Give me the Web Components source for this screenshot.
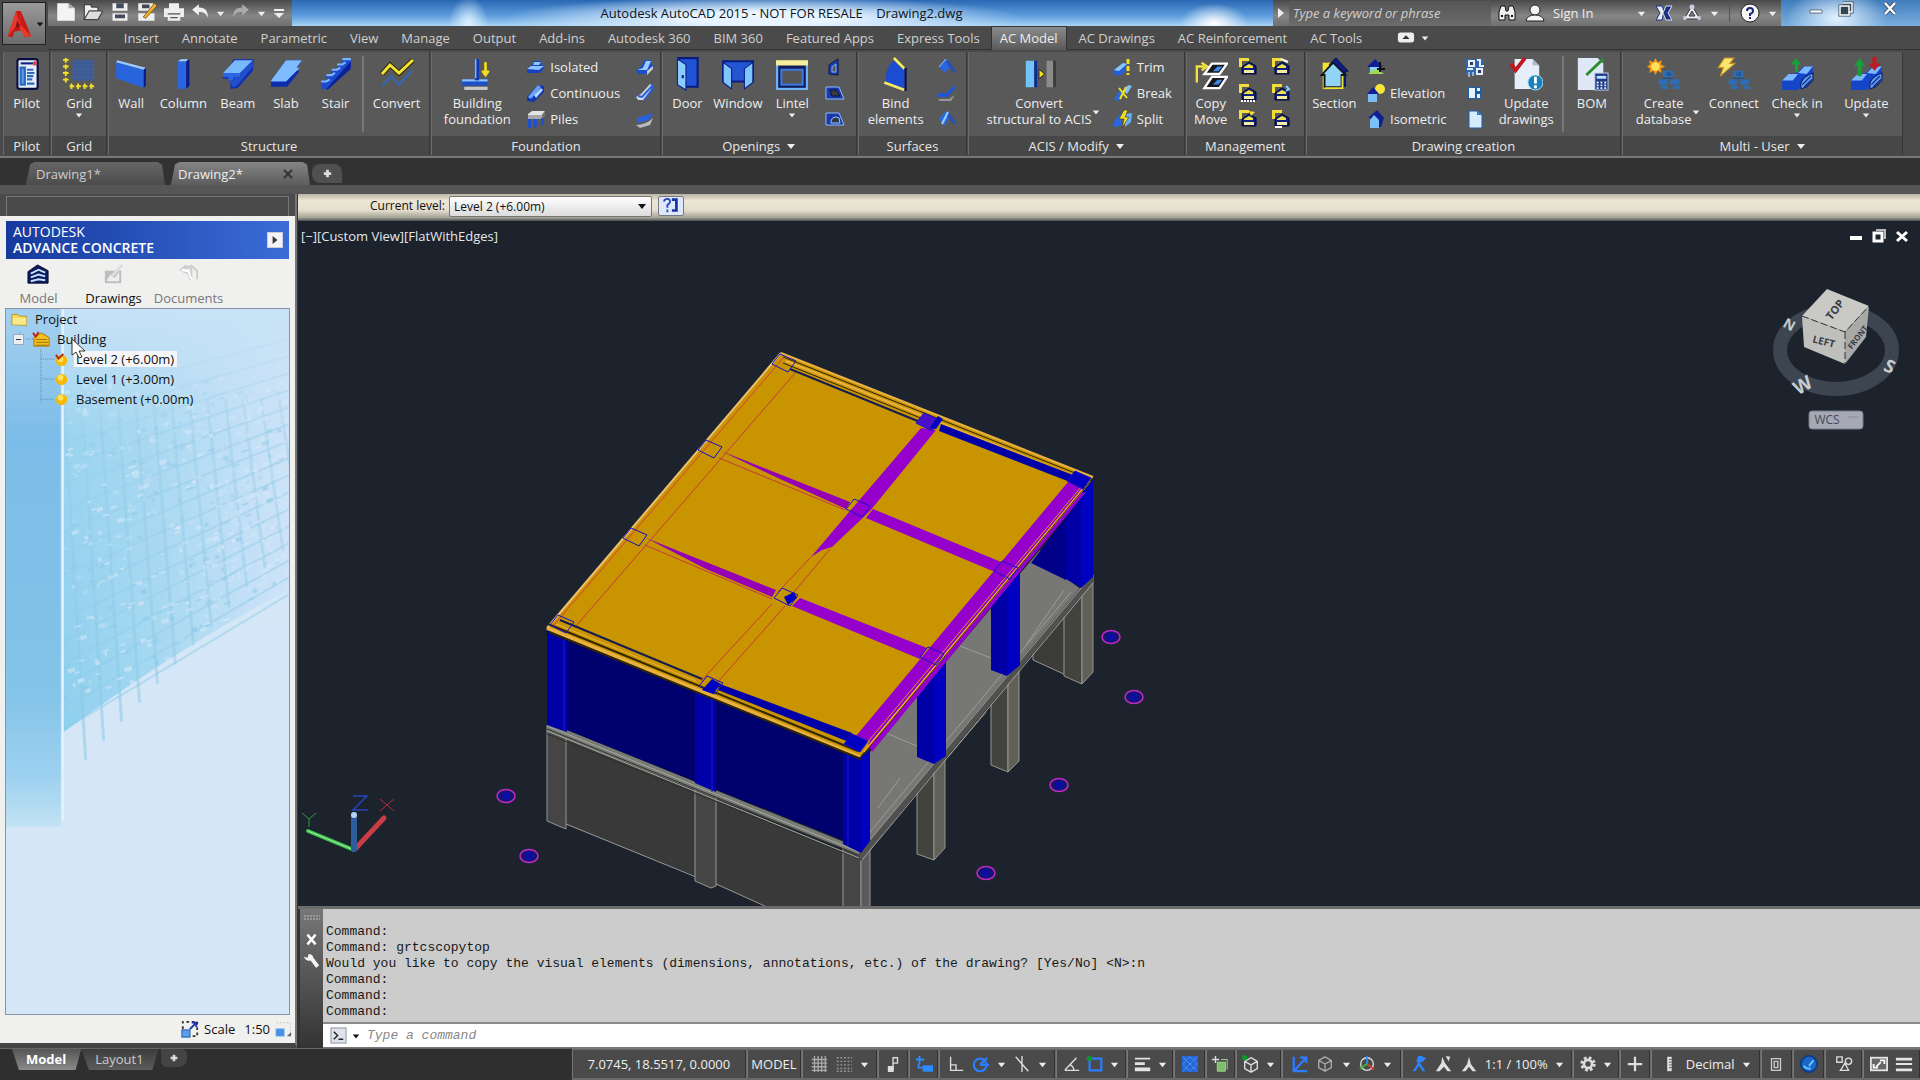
<!DOCTYPE html>
<html lang="en">
<head>
<meta charset="utf-8">
<title>Autodesk AutoCAD 2015</title>
<style>
html,body{height:100%;margin:0}
body{background:#2f2f2f;color:#eee;font:13px/16px "Open Sans","Noto Sans",sans-serif;overflow:hidden}
cad-app{height:100vh}
</style>
</head>
<body>
<cad-app></cad-app>
<script>
/* Icon artwork: [viewBox size, markup] */
const mgmt = (extra)=>[20,`<path d="M1 1h10v3H4v6H1z" fill="#f4dd38"/><path d="M4 10l7-5 7 4v8H4z" fill="#0c1f7c" stroke="#04072a"/><path d="M6 10l5-3 4 2v2H6z" fill="#f0e04a"/><path d="M6 13h10v3H6z" fill="#f6ecA0"/>${extra}`];
const db = `<path d="M15 13h10v6H15zM11 21h8v5h-8zM22 21h8v5h-8zM13 27h7v3h-7zM25 27h6v3h-6z" fill="#2d6db4"/><path d="M18 15h4v2h-4M15 20h10" stroke="#1d4c88" fill="none"/>`;
const slabs = `<path d="M2 22l6-6 8-1 6-6h9v7l-9 9-5 6H2z" fill="#1546c8"/><path d="M2 22l6-6h9l-5 6zM17 15l6-6h8l-6 7z" fill="#7cb8ff"/><path d="M20 30q-3-10 11-15v7l-6 6z" fill="#5a9cf0" stroke="#0a1a70"/><path d="M21 26l8-8M23 28l7-7" stroke="#0a1a70"/>`;
const star = n=>`<g fill="none" stroke="#ddd" stroke-width="1.5">${n}</g>`;
const ICONS = {
 logo:[32,`<path d="M4 29L13 2h5l11 27-7 1-3-7-8 1-2 6z" fill="#c81818"/><path d="M13 2l3 13-12 14zM18 2l-2 13 13 14-7 1-5-9z" fill="#e43a2c"/><path d="M14 12l3 7-5 2z" fill="#8c1010"/>`],
 'new':[16,`<path d="M1 1h9l5 4v10H1z" fill="#f4f4f4"/><path d="M10 1v4h5" fill="#aaa"/>`],
 open:[16,`<path d="M1 14V2h5l1 2h5v3" fill="#eee" stroke="#444"/><path d="M1 14l4-7h11l-4 7z" fill="#ddd" stroke="#444"/>`],
 save:[16,`<path d="M2 1h12v6H2zM2 9h12v6H2z" fill="#eee"/><path d="M5 1h6v4H5zM4 10h8v3H4z" fill="#444b5c"/>`],
 saveas:[16,`<path d="M1 1h12v6H1zM1 9h13v6H1z" fill="#eee"/><path d="M4 2h6v3H4z" fill="#445"/><path d="M5 12L14 1l2 2-9 10z" fill="#f2b42c" stroke="#6a3c10" stroke-width=".6"/>`],
 print:[16,`<path d="M4 1h8v4H4zM0 5h16v7H0zM3 10h10v5H3z" fill="#eee"/><path d="M3 9h10v1H3zM5 12h6v1H5z" fill="#555"/>`],
 undo:[16,`<path d="M1 6l6-5v3c6 0 8 3 8 9-2-4-4-5-8-5v3z" fill="#eee"/>`],
 redo:[16,`<path d="M15 6L9 1v3C3 4 1 7 1 13c2-4 4-5 8-5v3z" fill="#aaa"/>`],
 qmenu:[12,`<path d="M1 2h10v2H1zM1 6h10l-5 5z" fill="#eee"/>`],
 down:[10,`<path d="M1 3h8L5 8z" fill="#eee"/>`],
 ddown:[10,`<path d="M1 3h8L5 8z" fill="#111"/>`],
 right:[10,`<path d="M2 0l6 5-6 5z" fill="#eee"/>`],
 dright:[10,`<path d="M2 0l6 5-6 5z" fill="#333"/>`],
 binoc:[20,`<path d="M2 17V9l2-6h4l1 5h2l1-5h4l2 6v8h-6v-5H8v5z" fill="#f0f0f0" stroke="#111"/><path d="M4 13h2M14 13h2" stroke="#111" stroke-width="2"/>`],
 user:[20,`<circle cx="10" cy="7" r="5" fill="#f4f4f4" stroke="#222"/><path d="M1 18q1-6 9-6t9 6z" fill="#f4f4f4" stroke="#222"/>`],
 xch:[20,`<path d="M2 3h6l2 5-2 9H2l4-7z" fill="#eee" stroke="#16308a"/><path d="M18 3h-6l-3 7 3 7h6l-4-7z" fill="#16308a" stroke="#dde"/>`],
 a360:[20,`<path d="M10 3L2 16h16zM10 8l-3 5h6z" fill="#eee" fill-rule="evenodd" stroke="#334"/><circle cx="10" cy="4" r="2.5" fill="#ccd"/><circle cx="3" cy="15" r="2" fill="#ccd"/><circle cx="17" cy="15" r="2" fill="#ccd"/>`],
 help:[20,`<circle cx="10" cy="10" r="9" fill="#f6f6f6" stroke="#222"/><path d="M7 8q0-3 3-3t3 3q0 2-3 3v2M10 14v2" stroke="#142a78" stroke-width="2" fill="none"/>`],
 winmin:[16,`<path d="M2 9h12v3H2z" fill="#fff" stroke="#345" stroke-width=".7"/>`],
 winmax:[16,`<path d="M5 2h9v9h-3M2 5h9v9H2zM5 8h3v3H5z" fill="none" stroke="#345" stroke-width="3"/><path d="M5 2h9v9h-3M2 5h9v9H2z" fill="none" stroke="#fff" stroke-width="1.5"/>`],
 winclose:[16,`<path d="M3 2l10 11M13 2L3 13" stroke="#345" stroke-width="4"/><path d="M3 2l10 11M13 2L3 13" stroke="#fff" stroke-width="2.5"/>`],
 ribmin:[20,`<rect x="1" y="4" width="18" height="11" rx="3" fill="#eee"/><path d="M6 11l4-4 4 4z" fill="#333"/>`],
 pilot:[32,`<rect x="7" y="2" width="19" height="28" rx="2" fill="#e8eef8" stroke="#081040" stroke-width="2"/><path d="M10 5h12v2H10z" fill="#102080"/><path d="M22 4h3v4h-3z" fill="#e04040"/><path d="M10 10h4v16h-4zM16 12h6M16 15h7M16 18h6M16 21h5M16 25h7" stroke="#2a6ac4" stroke-width="2" fill="#5a9ae0"/>`],
 grid:[36,`<path d="M11 3h23v22H11z" fill="#45608e"/><path d="M14 3v22M18 3v22M22 3v22M26 3v22M30 3v22M11 7h23M11 11h23M11 15h23M11 19h23M11 23h23" stroke="#385a9c"/><g stroke="#f4e020" stroke-width="2"><path d="M4 1v26" stroke-dasharray="5 2"/><path d="M1 3h6M1 10h6M1 17h6M1 24h6"/><path d="M8 31h26" stroke-dasharray="5 2"/><path d="M10 28v6M17 28v6M24 28v6M31 28v6"/></g>`],
 wall:[32,`<path d="M2 5l26 7v17L2 20z" fill="#2864dc"/><path d="M2 5l1-2 27 7-2 2z" fill="#9cc8ff"/><path d="M28 12l2-2v17l-2 2z" fill="#081c88"/>`],
 column:[32,`<path d="M11 4h8v26h-8z" fill="#2a66e0"/><path d="M11 4l3-2h7l-2 2z" fill="#a8d0ff"/><path d="M19 4l3-2v25l-3 3z" fill="#071a90"/>`],
 beam:[32,`<path d="M12 2h19l-1 11-14 16-7 1v-9l-8-1z" fill="#0e2fb4"/><path d="M13 3h17L18 15H2z" fill="#78b8fc"/><path d="M2 15h16v4H12l-1 3H7v-3H2z" fill="#2c66e0"/><path d="M18 15L30 3v6L17 25l-5 4-5-7h5v-3h6z" fill="#2250cc"/>`],
 slab:[32,`<path d="M2 23L16 3h15l-6 10h4L17 28H2z" fill="#0d2dac"/><path d="M2 22L16 3h15l-5 7h3L16 23H2z" fill="#7cbcff"/>`],
 stair:[32,`<path d="M2 30v-7h5v-6h5v-5h5V7h5V2h8v7L9 30z" fill="#1d4ad0"/><path d="M2 23h5l3-2M7 17h5l3-2M12 12h5l3-2M17 7h5l3-2M22 2h8" stroke="#7ab4ff" stroke-width="2" fill="none"/><path d="M30 4v7L9 30l-3 1z" fill="#0a2298"/>`],
 convert:[34,`<path d="M2 17l8-9 9 8L33 3" stroke="#302c00" stroke-width="5" fill="none"/><path d="M2 17l8-9 9 8L33 3" stroke="#f4e43a" stroke-width="3" fill="none"/><path d="M2 29l9-10 8 9 13-14" stroke="#2f68b8" stroke-width="2" fill="none"/>`],
 bfound:[32,`<path d="M4 28h22v3H4z" fill="#c8c8c8"/><path d="M2 21h24v6H2z" fill="#1c50c8"/><path d="M2 21h24v2H2z" fill="#8cc4ff"/><path d="M14 2h4v20h-4z" fill="#1438b0"/><path d="M14 2h1.500v18H14z" fill="#79b4ff"/><path d="M24 5v11M21 13l3 4 3-4" stroke="#f2e020" stroke-width="2.500" fill="none"/>`],
 isolated:[20,`<path d="M1 12l4-3 3-5h7v4l4 1-5 7H1z" fill="#1440c4"/><path d="M1 12l4-3h13l-5 4zM8 5h7l-2 3H7z" fill="#8cc4ff"/>`],
 cont:[20,`<path d="M1 14L12 2l6 1v6L8 19l-7-1z" fill="#1234b0"/><path d="M2 14L12 2l3 2L5 16z" fill="#64a4fa"/><path d="M8 12l7-7 2 2-7 8z" fill="#b0d8ff"/>`],
 piles:[20,`<path d="M2 5l4-3h13l-3 4H2z" fill="#e4e4e4"/><path d="M2 6h14v4H2z" fill="#a8a8a8"/><path d="M16 6l3-4v5l-3 3z" fill="#777"/><path d="M2 10h3v9H2zM8 10h3v8H8zM15 9h3v7h-3z" fill="#1c50d0"/>`],
 fs1:[20,`<path d="M1 13l5-3 3-7h7v4l3 2-7 8H3z" fill="#1c50c8"/><path d="M2 13l6-2 3-7h5l-4 9z" fill="#9cccff"/><path d="M12 14l6-5v3l-6 6z" fill="#c8ccd4"/>`],
 fs2:[20,`<path d="M1 14l5-3L15 1l3 2-9 14H3z" fill="#cfd6e4"/><path d="M3 13l4 1L17 3v4L9 17" stroke="#2860d8" stroke-width="2" fill="none"/>`],
 fs3:[20,`<path d="M2 9l16-5-4 7-12 3z" fill="#2860e0"/><path d="M1 16q10 0 17-7l-3 7-10 3z" fill="#bbb"/>`],
 door:[32,`<path d="M8 1h18v27H14z" fill="#2154d4" stroke="#0a1c80" stroke-width="2"/><path d="M7 2l8 5v24l-8-5z" fill="#8accff" stroke="#0c2080"/><path d="M12 17v3" stroke="#0c2080" stroke-width="2"/>`],
 windowi:[32,`<path d="M2 4h28v19H2z" fill="#2456d4" stroke="#0a1c80" stroke-width="2"/><path d="M2 5l8 6v19l-8-6zM30 5l-8 6v19l8-6z" fill="#80c4fc" stroke="#0a1c80"/>`],
 lintel:[32,`<rect x="2" y="5" width="28" height="25" fill="#111b58" stroke="#6fb4ff" stroke-width="2"/><rect x="6" y="12" width="20" height="14" fill="#555" stroke="#3a78e0" stroke-width="2"/><path d="M1 3h30v5H1z" fill="#f6ee9c"/>`],
 op1:[20,`<path d="M4 17V8l9-6v16z" fill="#2040b0" stroke="#080f50"/><path d="M7 15v-5l4-3v8z" fill="#555" stroke="#7ab0ff"/>`],
 op2:[20,`<path d="M1 4h13l5 12H1z" fill="#1c38a8" stroke="#86bcff"/><path d="M5 7h6l4 6H7z" fill="#3c3c44" stroke="#06103c"/>`],
 op3:[20,`<path d="M1 4h13l5 12H1z" fill="#1c38a8" stroke="#86bcff"/><path d="M6 12q2-6 8-3l1 5H6z" fill="#30364a" stroke="#9cf"/>`],
 bind:[32,`<path d="M6 24q0-14 8-21l10 9v19z" fill="#1c4cd0"/><path d="M5 24l19 7M14 1l10 10" stroke="#f4ec5c" stroke-width="2.500"/><path d="M25 10v22" stroke="#06135c" stroke-width="2"/>`],
 sf1:[20,`<path d="M2 10l7-8 5 6-6 8z" fill="#2a66e0"/><path d="M2 10l7-8" stroke="#92c6ff"/><path d="M10 4l8 11" stroke="#2450b8" stroke-width="3"/>`],
 sf2:[20,`<path d="M1 10h8l9-8v4l-8 8H1z" fill="#2056d4"/><path d="M1 16h11l6-4-4 6H3z" fill="#999"/>`],
 sf3:[20,`<path d="M2 10l7-8 5 4-7 11z" fill="#2a6ae4"/><path d="M10 4l8 11" stroke="#2450b8" stroke-width="3"/><path d="M5 15l6-12" stroke="#9cd0ff" stroke-width="2"/>`],
 acis:[36,`<path d="M4 4h9v28H4z" fill="#72c4f4"/><path d="M13 4h3v28h-3z" fill="#0d2a9c"/><path d="M18 13l6 5-6 5z" fill="#f4e020" stroke="#222"/><path d="M26 4h7v28h-7z" fill="#8c8c8c"/><path d="M33 4h3v28h-3z" fill="#3c3c3c"/>`],
 trim:[20,`<path d="M1 13l9-7 4 1-3 9-5 3-5-2z" fill="#2460d8"/><path d="M1 13l9-7 4 1-8 7z" fill="#8cc8ff"/><path d="M15 2v16" stroke="#f2e020" stroke-width="3" stroke-dasharray="5 2"/>`],
 brk:[20,`<path d="M1 17l5-9 4 2-5 8z" fill="#2a66e0"/><path d="M10 8l5-6 4 1-5 8z" fill="#80c0ff"/><path d="M6 5l8 10M13 4l-6 12" stroke="#f2e020" stroke-width="2"/>`],
 split:[20,`<path d="M1 13l5-7 4-1-2 12-7 1z" fill="#2a66e0"/><path d="M12 5l7-1-1 9-6 5z" fill="#68b0fa"/><path d="M11 1L6 10h5l-2 9 7-11h-4l3-7z" fill="#f2e020" stroke="#333" stroke-width=".6"/>`],
 copymove:[36,`<path d="M3 27V10h8M8 6l6 4-6 4" stroke="#f0e03c" stroke-width="2.5" fill="none"/><path d="M19 7h16l-8 11H11zM19 21h16L27 33H11z" fill="#16181c" stroke="#fff" stroke-width="2.5"/><path d="M20 15l5-5h5l-4 5zM20 29l5-5h5l-4 5z" fill="#3f8cf0"/>`],
 m1:mgmt(''),m2:mgmt('<path d="M10 2l7 3" stroke="#fff" stroke-width="2"/>'),m3:mgmt('<path d="M3 18h15" stroke="#fff" stroke-width="2" stroke-dasharray="2 1"/>'),m4:mgmt('<path d="M15 3l3 3-3 2" stroke="#8cf" fill="none" stroke-width="2"/>'),m5:mgmt('<path d="M11 2l6 1-4 4z" fill="#f4dd38"/>'),m6:mgmt('<path d="M4 18h7" stroke="#fff" stroke-width="2"/>'),
 section:[36,`<path d="M6 6h13v28H6z" fill="#f0e430"/><path d="M20 1l13 14h-3v16h-8V14l-9-6z" fill="#0d1c88" stroke="#060b3c"/><path d="M8 32V19H5L17 6l13 13h-4v13z" fill="#92d4f8" stroke="#15151c" stroke-width="2"/><path d="M8 33h19V20" stroke="#f0e430" stroke-width="2" fill="none"/>`],
 d1:[20,`<path d="M1 10l8-8 8 8z" fill="#101f94"/><path d="M4 10h9v7H4z" fill="#8cd0fc"/><path d="M2 17l5-4h6l5 4z" fill="#a0d850"/><path d="M14 5v10M11 12h8" stroke="#111" stroke-width="2"/>`],
 elevation:[20,`<circle cx="14" cy="6" r="5" fill="#f6e63c"/><path d="M1 11l6-7 6 7z" fill="#101f94"/><path d="M2 11h9v8H2z" fill="#7cbcf4"/>`],
 iso:[20,`<path d="M2 9l9-8 7 8-3 9H5V9z" fill="#0f1f90"/><path d="M4 11l4-5 5 5v8H4z" fill="#7cc0f8"/>`],
 q1:[20,`<path d="M1 2h18v16H1z" fill="#2f68b0"/><path d="M4 4h5v5H4zM12 3h3v6h4M2 12h6M12 12h5v5h-5z" fill="#2b3c60" stroke="#e8eef8" stroke-width="2"/><path d="M4 15v5M8 15v4" stroke="#fff"/>`],
 q2:[20,`<path d="M3 4h13v12H3z" fill="#1e5ca8"/><path d="M4 5h6v10H4zM12 5h3v3h-3zM12 11h3v4h-3z" fill="#e8f4fc"/>`],
 q3:[20,`<path d="M4 2h8l5 4v13H4z" fill="#d4ecfc" stroke="#1e5ca8"/><path d="M12 2v4h5" fill="#2f7cc8"/>`],
 updraw:[36,`<path d="M6 2h19l7 7v25H6z" fill="#e6eef8"/><path d="M25 2v7h7" fill="#b0bccc"/><path d="M2 7l5 7L17 1" stroke="#c01820" stroke-width="4" fill="none"/><circle cx="28" cy="27" r="8" fill="#1684bc" stroke="#bfe0f4"/><path d="M28 21v7M28 30v3" stroke="#fff" stroke-width="3"/>`],
 bom:[36,`<path d="M3 1h21l6 6v28H3z" fill="#dfe8f6"/><path d="M12 19L30 2" stroke="#2c8c30" stroke-width="3"/><rect x="21" y="17" width="14" height="18" fill="#1e3c84" stroke="#c0d0ec"/><path d="M23 20h10v3H23z" fill="#bfe0ff"/><path d="M24 26v8M28 26v8M32 26v8" stroke="#dfe8ff" stroke-width="2" stroke-dasharray="2 1"/>`],
 createdb:[32,`<path d="M8 1l2 4 4-2-1 4 4 2-4 2 1 4-4-2-2 4-2-4-4 2 1-4-3-2 3-2-1-4 4 2z" fill="#ef9a1a"/><circle cx="8" cy="9" r="4" fill="#ffe25a"/>${db}`],
 connect:[32,`<path d="M7 1h9l-4 5h5L3 18l3-8H1z" fill="#f6e470" stroke="#c89018"/>${db}`],
 checkin:[32,`${slabs}<path d="M14 14V7h-4l5-6 5 6h-3v7z" fill="#18a038"/>`],
 update:[32,`${slabs}<path d="M8 18V8H5l5-7 5 7h-3v10z" fill="#18a038"/><path d="M22 0h4v6h4l-6 7-6-7h4z" fill="#c01c24"/>`],
 tabx:[12,`<path d="M2 2l8 8M10 2l-8 8" stroke="#333" stroke-width="2"/>`],
 plus:[12,`<path d="M6 2v8M2 6h8" stroke="#ddd" stroke-width="3"/>`],
 wx:[16,`<path d="M3 2l10 12M13 2L3 14" stroke="#fff" stroke-width="3"/>`],
 wrench:[18,`<path d="M1 5l4 1 1-4q4 0 5 4l6 8-3 3-6-8q-5 1-7-4z" fill="#f4f4f4"/>`],
 grip:[18,`<path d="M1 7h16M1 10h16" stroke="#999" stroke-dasharray="2 1" stroke-width="2"/>`],
 prompt:[18,`<rect x="1" y="1" width="16" height="16" fill="#dfe3ec" stroke="#8a90a0"/><path d="M4 5l4 4-4 4M9 13h5" stroke="#222" stroke-width="1.5" fill="none"/>`],
 cmdq:[20,`<path d="M2 5q1-3 4-3t3 3q0 2-3 4v3M6 14v3" stroke="#2048c0" stroke-width="2" fill="none"/><path d="M11 3h5v12h-5" stroke="#1434a8" stroke-width="3" fill="none"/>`],
 model:[24,`<path d="M1 21V9l10-7 11 6v13z" fill="#0c1a5c" stroke="#080c30"/><path d="M4 11l8-4 7 3M4 15l8-3 7 2M4 19l8-2 7 1" stroke="#c8e0ff" stroke-width="2" fill="none"/>`],
 drawings:[24,`<path d="M3 8h17v13H3z" fill="#bdbdbd"/><path d="M5 18l4-6 4 4 5-7v10H5z" fill="#eee"/><path d="M10 14L21 2" stroke="#ddd" stroke-width="3"/>`],
 docs:[24,`<path d="M3 8l6-5 6 3v9M8 6l7-3 6 5v9M6 9q7 0 8 9" fill="none" stroke="#cdcdcd" stroke-width="2"/><path d="M5 7l7 2 3 8" stroke="#fff" stroke-width="2" fill="none"/>`],
 folder:[20,`<path d="M1 16V4h7l2 2h8v11z" fill="#f6d858" stroke="#b48a20"/><path d="M2 8h16v8H2z" fill="#fbe88a"/>`],
 building:[20,`<path d="M2 17V8l8-5 8 5v9z" fill="#f2c01c" stroke="#a87808"/><path d="M4 10h12M4 13h13M4 16h13" stroke="#a07010"/><path d="M1 3l3 4 3-5" stroke="#c02018" stroke-width="2" fill="none"/>`],
 ball:[16,`<circle cx="8" cy="8" r="6" fill="#f6b800"/><circle cx="7" cy="6" r="3" fill="#ffe45c"/>`],
 ballc:[16,`<circle cx="8" cy="9" r="6" fill="#f6b800"/><circle cx="7" cy="8" r="3" fill="#ffe45c"/><path d="M2 3l3 4 5-5" stroke="#b02818" stroke-width="2" fill="none"/>`],
 scale:[20,`<path d="M2 10V2h16v16h-8" fill="none" stroke="#333" stroke-width="2" stroke-dasharray="3 3"/><rect x="1" y="11" width="9" height="8" fill="#5aa0ec" stroke="#1a4ca0"/><path d="M10 10l6-6M12 3h5v5" stroke="#1830a8" stroke-width="2" fill="none"/>`],
 scale2:[20,`<path d="M2 2h16v16" fill="none" stroke="#bbb" stroke-dasharray="2 2"/><rect x="1" y="9" width="10" height="9" fill="#4a90e0" stroke="#9cf"/><path d="M14 18h5v-5z" fill="#666"/>`],
 s_grid:[20,star('<path d="M5 1v18M9 1v18M13 1v18M17 1v18M2 5h17M2 9h17M2 13h17M2 17h17" stroke="#aaa"/>')],
 s_snap:[20,`<path d="M2 3h17M2 7h17M2 11h17M2 15h17M2 18h17" stroke="#999" stroke-width="1.500" stroke-dasharray="2 2"/>`],
 s_infer:[20,star('<path d="M10 17V3h5v6h-5"/><path d="M5 13h5v5H5z" fill="#ddd"/>')],
 s_dyn:[20,`<path d="M5 1v9M1 5h9" stroke="#2c8cff" stroke-width="2"/><path d="M9 12h11v6H9z" fill="#2c8cff" stroke="#2c8cff"/><path d="M4 10v4h5" fill="none" stroke="#2c8cff" stroke-width="2"/>`],
 s_ortho:[20,star('<path d="M4 2v15h14M4 11h6v6"/>')],
 s_polar:[20,`<g fill="none" stroke="#2c7cff" stroke-width="2.5"><circle cx="9" cy="11" r="7"/><path d="M9 11h10M9 11l8-8"/></g>`],
 s_iso:[20,star('<path d="M10 1v18M3 2l14 16"/>')],
 s_track:[20,star('<path d="M2 17h16M2 17L15 3M8 11q4 2 4 6"/>')],
 s_osnap:[20,`<path d="M4 4h13v13H4z" fill="none" stroke="#2c7cff" stroke-width="2.5"/><circle cx="4" cy="4" r="3" fill="#0a9a2c"/>`],
 s_lw:[20,`<path d="M1 3h17v2H1zM1 8h11v3H1zM1 14h17v4H1z" fill="#e4e4e4"/>`],
 s_trans:[20,`<path d="M1 1h18v18H1z" fill="#2468d8"/><path d="M2 2l16 16M18 2L2 18M10 2l8 8-8 8-8-8z" stroke="#7ab6ff" stroke-dasharray="1 1" fill="none"/>`],
 s_cyc:[20,`<path d="M1 5h8M5 1v8" stroke="#ddd" stroke-width="1.500"/><path d="M11 5h7v11" stroke="#a4dc90" fill="none"/><path d="M7 8h9v10H7z" fill="#7cbc6c" stroke="#a4dc90"/>`],
 s_3d:[20,star('<path d="M10 3l7 4v8l-7 4-7-4V7zM3 7l7 4 7-4M10 11v8"/>')+`<circle cx="3" cy="3" r="3" fill="#0a9a2c"/>`],
 s_ucs:[20,`<path d="M3 2v16h15M3 18L16 4M10 3h7v6" fill="none" stroke="#2c7cff" stroke-width="2.5"/>`],
 s_filt:[20,star('<path d="M10 2l7 4v8l-7 4-7-4V6zM3 6l7 4 7-4M10 10v8" stroke="#aaa"/>')],
 s_giz:[20,star('<circle cx="10" cy="10" r="7"/>')+`<path d="M10 10V1" stroke="#2c8cff" stroke-width="2"/><path d="M10 10l8 6" stroke="#e04030" stroke-width="2"/><path d="M10 10l-8 5" stroke="#40b040" stroke-width="2"/>`],
 s_anb:[20,`<path d="M10 7l7 11h-3l-4-6-4 6H3zM9 1h4l5 3-5 4H7z" fill="#2c84ff"/>`],
 s_anf:[20,`<path d="M8 2l3 7 7 9h-4l-4-5-5 5H1l6-9zM12 1l5 1-2 5z" fill="#e0e0e0"/>`],
 s_an:[20,`<path d="M10 2l2 8 6 8h-4l-4-5-4 5H2l6-8z" fill="#e0e0e0"/>`],
 s_gear:[20,`<circle cx="10" cy="10" r="7" fill="none" stroke="#ddd" stroke-width="3" stroke-dasharray="3 2.5"/><circle cx="10" cy="10" r="4.5" fill="none" stroke="#ddd" stroke-width="3"/>`],
 s_plus:[20,`<path d="M10 2v16M2 10h16" stroke="#ddd" stroke-width="2.5"/>`],
 s_rule:[20,`<path d="M8 2h5v16H8z" fill="#e0e0e0"/><path d="M10 5h3M10 8h3M10 11h3M10 14h3" stroke="#555"/>`],
 s_qp:[20,`<path d="M5 4h10v13H5zM8 7h4v7H8z" fill="none" stroke="#ccc" stroke-width="1.500"/>`],
 s_hw:[20,`<circle cx="10" cy="10" r="9" fill="#1c66c8" stroke="#0c3c88" stroke-width="2"/><path d="M10 12l5-6M4 12q3 4 8 3" stroke="#6cf" stroke-width="2" fill="none"/>`],
 s_isoo:[20,star('<path d="M2 2h6v6H2zM8 14l3-5 4 8H6z"/><circle cx="15" cy="7" r="3.5"/>')],
 s_clean:[20,`<rect x="1" y="3" width="18" height="14" fill="#666" stroke="#e4e4e4" stroke-width="2"/><path d="M11 6h5v4M9 14H4v-4M12 8l-5 5" stroke="#fff" stroke-width="2" fill="none"/>`],
 s_menu:[20,`<path d="M1 3h18v3H1zM1 9h18v2H1zM1 15h18v3H1z" fill="#e4e4e4"/>`],
 vmin:[14,`<path d="M1 7h12v4H1z" fill="#fff"/>`],
 vmax:[14,`<path d="M4 1h9v9" fill="none" stroke="#bbb" stroke-width="2"/><rect x="2" y="4" width="8" height="8" fill="none" stroke="#fff" stroke-width="3"/>`],
 vclose:[14,`<path d="M2 3l10 9M12 3L2 12" stroke="#fff" stroke-width="3"/>`]
};

const BASE = `*{box-sizing:border-box}button{font:inherit;color:inherit;background:none;border:0;margin:0;padding:0;cursor:default}a{color:inherit;text-decoration:none}`;
function define(name, css, html){
  customElements.define(name, class extends HTMLElement{
    connectedCallback(){
      if(this.shadowRoot) return;
      const t=document.createElement('template');
      t.innerHTML=`<style>${BASE}${css}</style>${typeof html==='function'?html(this):html}`;
      this.attachShadow({mode:'open'}).append(t.content.cloneNode(true));
    }
  });
}

define('cad-icon',`:host{display:inline-flex;flex:none;width:var(--s,20px);height:var(--s,20px)}svg{width:100%;height:100%;display:block}`,
 el=>{const [n,m]=ICONS[el.getAttribute('name')];return `<svg viewBox="0 0 ${n} ${n}" aria-hidden="true">${m}</svg>`;});
const ic=(n,s)=>`<cad-icon name="${n}" style="--s:${s}px"></cad-icon>`;

/* Title row */
define('cad-title',`
:host{display:flex;height:26px;background:linear-gradient(#4a4a4a,#858585 60%,#707070)}
.qat{display:flex;align-items:center;gap:7px;width:244px;padding-left:8px}
.sky{flex:1;display:flex;align-items:center;justify-content:center;color:#0c1420;white-space:pre;padding-right:2px;
 background:radial-gradient(ellipse 20px 26px at 18% 90%,#dff2ff,transparent),radial-gradient(ellipse 34px 20px at 94% 90%,#fff,transparent),radial-gradient(ellipse 260px 22px at 48% 70%,#e8f4ff 30%,transparent),linear-gradient(#2a68b4,#5c9cdc 60%,#a8d4f6)}
.info{display:flex;align-items:center;width:508px}
.key{width:16px;display:flex;justify-content:center}
input{width:202px;height:25px;border:0;background:linear-gradient(#555,#6c6c6c);color:#ddd;font:italic 13px "Open Sans",sans-serif;padding:0 4px}
input::placeholder{color:#d0d0d0;opacity:1}
.acc{flex:1;display:flex;align-items:center;gap:8px;padding:0 4px 0 6px}
.acc span{flex:1;color:#eee}
.acc i{width:1px;height:18px;background:#555;margin:0 2px}
.win{width:139px;display:flex;align-items:center;justify-content:flex-end;gap:14px;padding:0 22px 5px 0;background:radial-gradient(ellipse 50px 30px at 40% 70%,#e4f2ff,transparent),linear-gradient(#3f7cbc,#7ab0e0)}
.win button:last-child{margin-left:14px}
`,`<div class="qat">${['new','open','save','saveas','print'].map(n=>`<button aria-label="${n}">${ic(n,20)}</button>`).join('')}<button aria-label="undo">${ic('undo',18)}</button>${ic('down',9)}<button aria-label="redo">${ic('redo',18)}</button>${ic('down',9)}${ic('qmenu',12)}</div>
<div class="sky"><slot></slot></div>
<div class="info"><span class="key">${ic('right',10)}</span><input aria-label="Search" placeholder="Type a keyword or phrase">
<div class="acc">${ic('binoc',20)}${ic('user',20)}<span>Sign In</span>${ic('down',9)}${ic('xch',20)}${ic('a360',20)}${ic('down',9)}<i></i>${ic('help',20)}${ic('down',9)}</div></div>
<div class="win"><button aria-label="Minimize">${ic('winmin',16)}</button><button aria-label="Restore">${ic('winmax',16)}</button><button aria-label="Close">${ic('winclose',16)}</button></div>`);

/* Ribbon tab row */
define('cad-ribbon-tabs',`
:host{display:flex;height:24px;background:#4a4a4a;border-bottom:1px solid #333;padding-left:4px;align-items:stretch}
a{padding:4px 11px 0 12px;color:#d0d0d0;white-space:nowrap}
a.on{background:linear-gradient(#8a8a8a,#5a5a5a);border:1px solid #333;border-bottom:0;color:#eee;margin-bottom:-1px;padding:3px 8px 0}
.m{display:flex;align-items:center;gap:6px;margin-left:24px}
`,`${['Home','Insert','Annotate','Parametric','View','Manage','Output','Add-ins','Autodesk 360','BIM 360','Featured Apps','Express Tools','AC Model','AC Drawings','AC Reinforcement','AC Tools'].map(t=>`<a href="#" ${t==='AC Model'?'class="on"':''}>${t}</a>`).join('')}<span class="m">${ic('ribmin',18)}${ic('down',8)}</span>`);

/* One ribbon panel: grid of tools over a caption band */
define('cad-panel',`
:host{display:flex;flex-direction:column;flex:var(--w) 1 0;min-width:0;border-left:1px solid #6a6a6a;border-right:1px solid #383838;background:#595959}
.body{flex:1;display:grid;grid-template-columns:var(--cols);padding-top:4px}
.cap{height:19px;display:flex;align-items:center;justify-content:center;gap:6px;background:#474747;color:#e6e6e6;white-space:nowrap}
`,el=>`<div class="body"><slot></slot></div><div class="cap">${el.getAttribute('caption')}${el.hasAttribute('more')?ic('down',10):''}</div>`);
define('cad-tool',`
:host{display:block;min-width:0}
:host([sep]){border-left:2px solid #777;margin-bottom:4px}
button{width:100%;display:flex;flex-direction:column;align-items:center;white-space:nowrap;text-align:center}
cad-icon:first-child{margin:1px 0}
.t{margin-top:3px;position:relative}
.side{position:absolute;left:100%;top:12px;line-height:8px}
`,el=>{const d=el.getAttribute('drop');return `<button>${ic(el.getAttribute('icon'),34)}<span class="t"><slot></slot>${d==='side'?`<span class="side">${ic('down',8)}</span>`:''}</span>${d==='below'?ic('down',8):''}</button>`;});
define('cad-stack',`
:host{display:flex;flex-direction:column;min-width:0;gap:4px;align-items:flex-start}
button{height:22px;display:flex;align-items:center;gap:4px;white-space:nowrap;padding-left:4px}
`,el=>JSON.parse(el.getAttribute('items')).map(([i,t])=>`<button aria-label="${t||i}">${ic(i,20)}${t?`<span>${t}</span>`:''}</button>`).join(''));

const T=(i,l,x='')=>`<cad-tool icon="${i}" ${x}>${l}</cad-tool>`;
const S=(...a)=>`<cad-stack items='${JSON.stringify(a)}'></cad-stack>`;
const P=(cap,w,cols,body,more='')=>`<cad-panel caption="${cap}" ${more} style="--w:${w};--cols:${cols.map(c=>`minmax(0,${c}fr)`).join(' ')}">${body}</cad-panel>`;
define('cad-ribbon',`
:host{display:flex;gap:1px;height:108px;background:#4a4a4a;border-bottom:2px solid #777;padding:2px 0 1px 3px}
.end{width:16px}`,
 P('Pilot',46,[48],T('pilot','Pilot'))
+P('Grid',54,[56],T('grid','Grid','drop="below"'))
+P('Structure',324,[45,60,50,47,53,68],T('wall','Wall')+T('column','Column')+T('beam','Beam')+T('slab','Slab')+T('stair','Stair')+T('convert','Convert','sep'))
+P('Foundation',230,[91,110,29],T('bfound','Building<br>foundation')+S(['isolated','Isolated'],['cont','Continuous'],['piles','Piles'])+S(['fs1'],['fs2'],['fs3']))
+P('Openings',195,[50,52,58,35],T('door','Door')+T('windowi','Window')+T('lintel','Lintel','drop="below"')+S(['op1'],['op2'],['op3']),'more')
+P('Surfaces',109,[75,34],T('bind','Bind<br>elements')+S(['sf1'],['sf2'],['sf3']))
+P('ACIS / Modify',217,[141,76],T('acis','Convert<br>structural to ACIS','drop="side"')+S(['trim','Trim'],['brk','Break'],['split','Split']),'more')
+P('Management',118,[48,33,37],T('copymove','Copy<br>Move')+S(['m1'],['m3'],['m5'])+S(['m2'],['m4'],['m6']))
+P('Drawing creation',317,[56,100,30,72,59],T('section','Section')+S(['d1'],['elevation','Elevation'],['iso','Isometric'])+S(['q1'],['q2'],['q3'])+T('updraw','Update<br>drawings')+T('bom','BOM','sep'))
+P('Multi - User',282,[82,60,68,72],T('createdb','Create<br>database','drop="side"')+T('connect','Connect')+T('checkin','Check in','drop="below"')+T('update','Update','drop="below"'),'more')
+`<div class="end"></div>`);

/* Document tabs */
define('cad-doctabs',`
:host{display:flex;align-items:flex-end;height:36px;background:#323232;border-bottom:9px solid #565656;padding-left:20px}
button{height:23px;width:145px;display:flex;align-items:center;justify-content:space-between;padding:0 16px;color:#ccc;background:linear-gradient(#666,#4c4c4c);clip-path:polygon(4% 100%,7% 10%,10% 0,95% 0,98% 12%,100% 100%)}
button.on{color:#eee;background:linear-gradient(#858585,#5c5c5c);padding-left:13px}
button.add{width:30px;height:19px;padding:0;justify-content:center;margin:0 0 2px 2px;background:#505050;border-radius:8px 8px 0 8px;clip-path:none}
`,`<button>Drawing1*</button><button class="on">Drawing2*${ic('tabx',12)}</button><button class="add" aria-label="New drawing">${ic('plus',11)}</button>`);

/* Side palette */
define('cad-palette',`
:host{display:flex;flex-direction:column;width:297px;background:#f0f0ee;border-right:2px solid #777;border-bottom:5px solid #444;color:#111}
.grab{height:22px;margin:0;background:#4b4b4b;border:solid #4b4b4b;border-width:2px 6px 0}
.grab div{height:20px;border:1px solid #777;border-bottom:0}
.brand{margin:5px 6px 0;height:38px;display:flex;align-items:center;justify-content:space-between;padding:0 6px 0 7px;background:linear-gradient(90deg,#163a9c,#3a6cd8);color:#fff;font-size:14px;line-height:16px}
.brand b{font-weight:600;display:block}
.brand button{width:16px;height:16px;background:#f4f4f4;border:1px solid #ccd;display:grid;place-items:center}
.modes{display:flex;padding:4px 0 0 1px;height:49px}
.modes button{width:75px;display:flex;flex-direction:column;align-items:center;gap:4px;color:#777}
.modes .on{color:#111}
.tree{position:relative;flex:1;margin:0 5px;border:1px solid #8893a8;overflow:hidden;background:#d5e7f7}
.bg{position:absolute;inset:0;width:100%;height:100%}
ul{position:relative;list-style:none;margin:0;padding:0}
li{display:flex;align-items:center;gap:5px;height:20px;padding-left:5px;white-space:nowrap}
li.b{padding-left:7px;gap:4px}
li.l{padding-left:48px}
li span{padding:0 3px 0 2px}
li .sel{background:#f6f6f8}
.box{width:11px;height:11px;border:1px solid #9ab;background:#eee;display:grid;place-items:center;margin-right:4px}
.box::after{content:"";width:5px;height:1px;background:#335}
.cur{position:absolute;left:65px;top:29px;width:16px;height:22px}
.foot{height:28px;display:flex;align-items:center;justify-content:flex-end;gap:5px;padding:0 3px 0 0}
.foot .v{margin-left:4px}
`,()=>{
  /* Pale scaffold picture behind the tree, from a seeded scatter of flecks */
  let g='',seed=7; const rnd=()=>(seed=(seed*16807)%2147483647)/2147483647;
  for(let i=0;i<13;i++){const x=58+i*18;g+=`<path d="M${x} 90L${x+22} ${450-i*19}" stroke="#8cc8e6" stroke-width="3" opacity="${.55-i*.015}"/>`;}
  for(let i=0;i<16;i++){g+=`<path d="M58 ${90+i*22}L284 ${30+i*17}" stroke="#8ecbe8" stroke-width="2" opacity=".5"/>`;}
  for(let i=0;i<520;i++){const x=58+rnd()*224,y=70+rnd()*(345-(x-58)*.62),w=2+rnd()*5;
   g+=`<path d="M${x.toFixed(0)} ${y.toFixed(0)}l${w.toFixed(0)} -${(w/3).toFixed(1)}" stroke="${rnd()>.3?'#dbeaf9':'#86c6e6'}" stroke-width="${rnd()>.6?4:2}" opacity="${(.25+rnd()*.4).toFixed(2)}"/>`;}
  return `
<div class="grab"><div></div></div>
<div class="brand"><div>AUTODESK<b>ADVANCE CONCRETE</b></div><button aria-label="Expand">${ic('dright',8)}</button></div>
<div class="modes"><button>${ic('model',23)}Model</button><button class="on">${ic('drawings',23)}Drawings</button><button>${ic('docs',23)}Documents</button></div>
<div class="tree">
<svg class="bg" viewBox="0 0 284 704" preserveAspectRatio="none" aria-hidden="true">
<defs><linearGradient id="m" x1="0" y1="0" x2="1" y2="0"><stop offset="0" stop-color="#8ed0ee"/><stop offset=".45" stop-color="#a6d8f1"/><stop offset="1" stop-color="#cfe3f8"/></linearGradient>
<linearGradient id="t" x1="0" y1="0" x2="0" y2="1"><stop offset="0" stop-color="#c8e2f6"/><stop offset=".3" stop-color="#c8e2f6" stop-opacity=".2"/><stop offset="1" stop-color="#c8e2f6" stop-opacity="0"/></linearGradient>
<linearGradient id="s" x1="0" y1="0" x2="0" y2="1"><stop offset="0" stop-color="#a4d0f0"/><stop offset=".25" stop-color="#7cbce8"/><stop offset=".75" stop-color="#84c4e8"/><stop offset=".9" stop-color="#9cd0f0"/><stop offset="1" stop-color="#c2e2f2"/></linearGradient></defs>
<path d="M56 0H284V280Q170 340 56 424z" fill="url(#m)"/><g fill="none">${g}</g><path d="M56 0H284V424H56z" fill="url(#t)"/>
<path d="M0 0h55v517H0z" fill="url(#s)"/><path d="M57 0v510" stroke="#e4f4fe" stroke-width="2"/>
<path d="M14 30v-8M20 30h8M35 40v53M35 50h14M35 70h14M35 90h14" stroke="#6a88a8" stroke-dasharray="1 1" fill="none"/></svg>
<ul><li>${ic('folder',17)}<span>Project</span></li><li class="b"><i class="box"></i>${ic('building',19)}<span>Building</span></li>
<li class="l">${ic('ballc',15)}<span class="sel">Level 2 (+6.00m)</span></li><li class="l">${ic('ball',15)}<span>Level 1 (+3.00m)</span></li><li class="l">${ic('ball',15)}<span>Basement (+0.00m)</span></li></ul>
<svg class="cur" viewBox="0 0 16 22" aria-hidden="true"><path d="M1 1v16l4-3 3 6 3-1-3-6h6z" fill="#fff" stroke="#333"/></svg>
</div>
<div class="foot">${ic('scale',18)}<span>Scale</span><span class="v">1:50</span>${ic('scale2',17)}</div>`;});

/* Level bar */
define('cad-levelbar',`
:host{display:flex;align-items:center;height:27px;background:linear-gradient(#b8b4a4,#ece6d4 25%,#e4dece 60%,#a4a294 88%,#4a4c50);padding:0 0 3px 72px;color:#111;font-size:12px}
.sel{display:grid;align-items:center;width:203px;margin:0 6px 0 3px}
label{width:76px}
select{grid-area:1/1;appearance:none;height:21px;border:1px solid #777;border-radius:2px;background:linear-gradient(#fff,#dcdcdc);font:12px "Open Sans",sans-serif;padding:0 4px;color:#111}
cad-icon.a{grid-area:1/1;justify-self:end;margin-right:5px;pointer-events:none}
button{width:26px;height:20px;background:#dfe8f8;border:1px solid #778;border-radius:2px;display:grid;place-items:center}
`,`<label for="lv">Current level:</label><span class="sel"><select id="lv"><option>Level 2 (+6.00m)</option><option>Level 1 (+3.00m)</option><option>Basement (+0.00m)</option></select><cad-icon class="a" name="ddown" style="--s:10px"></cad-icon></span><button aria-label="Level manager">${ic('cmdq',18)}</button>`);

/* Drawing viewport */
const node=(x,y,f='none')=>`<path d="M${x-12} ${y+1}l8-10 16 7-8 11z" fill="${f}" stroke="#1410c8"/>`;
const poly=(pts,f,x='')=>`<polygon points="${pts}" fill="${f}" ${x}/>`;
const line=(d,c,w=1)=>`<path d="${d}" stroke="${c}" stroke-width="${w}" fill="none"/>`;
const pin=(x,y)=>`<ellipse cx="${x}" cy="${y}" rx="9" ry="6.5" fill="#15166a" stroke="#c428c8" stroke-width="1.5"/><circle cx="${x}" cy="${y}" r="4" fill="#0c0ca8"/>`;
const OUT='stroke="#96968e" stroke-width="1"';
const ACC='#c89400', PUR='#9600cc', RED='#c43c40', NAVY='#00006e', BLU='#0000a6', BL2='#0000c0';
const building = [
 /* lower storey */
 poly('564,736 845,852 845,930 820,930 716,884 564,824','#393939'), line('M566 824L696 877M714 883L778 912','#999'),
 poly('547,725 566,732 566,829 547,821','#454545',OUT), poly('695,784 716,792 716,886 711,888 695,881','#454545',OUT),
 poly('843,848 861,855 861,915 843,915','#454545',OUT), poly('861,855 870,842 870,915 861,915','#5a5a5a',OUT),
 poly('1033,632 1066,590 1066,675 1033,660','#3b3b3a',OUT),
 poly('917,790 934,764 934,860 917,854','#42423e',OUT), poly('934,764 945,752 945,848 934,860','#605f58',OUT),
 poly('991,696 1008,674 1008,772 991,765','#42423e',OUT), poly('1008,674 1019,662 1019,761 1008,772','#605f58',OUT),
 poly('1064,600 1082,588 1082,684 1064,676','#42423e',OUT), poly('1082,588 1093,575 1093,672 1082,684','#605f58',OUT),
 /* middle floor slab */
 poly('870,752 1040,550 1066,578 1082,590 870,850','#777775'), poly('859,852 870,840 1093,572 1093,582 860,861','#50504e'),
 line('M859 853L1093 574M862 860L1093 583M870 832L1071 592M878 808L900 778M948 757L986 712M1026 645L1064 590M886 733L917 746M960 646L991 658','#9c9c98'),
 poly('547,722 859,848 859,855 547,731','#777b74'), line('M547 729L859 855M547 734L862 860','#303030'), line('M547 726L859 852M547 731L859 858','#a4a8a0'),
 /* upper storey walls and columns */
 poly('547,630 860,757 860,847 547,722',NAVY), poly('547,632 567,640 567,732 547,725',BLU), poly('695,690 716,698 716,792 695,783',BLU),
 poly('843,750 861,757 861,853 843,844',BLU), poly('861,757 870,750 870,841 861,853',BL2),
 line('M564 640V731M712 698V792M848 752V846','#1c1cc8'),
 poly('1079,500 1066,580 1031,563','#00008a'), poly('1081,496 1066,520 1066,579 1081,588',BLU), poly('1081,494 1093,480 1093,577 1081,588',BL2),
 poly('917,694 934,674 934,764 917,757',BLU), poly('934,674 946,660 946,756 934,764',BL2),
 poly('991,604 1007,584 1007,676 991,670',BLU), poly('1007,584 1020,570 1020,665 1007,676',BL2),
 /* roof slab */
 poly('781,353 1093,477 860,757 547,628',ACC), poly('1078,494 1086,492 872,752 868,744',PUR),
 line('M547 628L781 353','#ecc070',2), line('M553 626L784 357','#d8403c'), line('M576 626L796 372',RED),
 line('M781 353L1093 477','#e8b040',2), line('M783 357L1090 479M783 363L928 421','#2c2400'), line('M786 361L1086 481','#e8b040',2),
 line('M790 369L920 422','#151c50',2), poly('941,424 1073,475 1070,482 939,431',BLU),
 line('M547 628L860 757','#e8b040',4), line('M548 624L858 751M549 632L861 759','#302600',2), line('M560 620L702 679','#151c50',2), line('M556 624L696 681','#e8b040',1),
 poly('720,684 852,733 849,742 718,690',BLU),
 /* beams seen through the slab */
 poly('921,428 936,430 870,511 832,547 822,550 811,557 844,518',PUR),
 line('M811 557L778 592M830 549L794 592M772 604L701 681M785 606L716 684',RED),
 poly('721,451 850,502 846,509 780,479','#9600b4'), line('M719 458L845 510',RED),
 poly('646,538 776,590 772,597 706,569','#9600b4'), line('M645 545L772 599',RED),
 poly('873,509 1001,562 995,572 866,518',PUR), poly('800,598 927,648 920,659 792,606',PUR),
 poly('1068,482 1084,486 872,742 856,736',PUR),
 line('M1090 481L864 752','#f0b030',2), line('M1093 478L861 757','#3a2800'), line('M1087 480L861 750','#d89420'),
 node(784,363),node(928,422,'#4a10c8'),node(1079,480,BL2),node(710,449),node(858,508),node(1006,570),node(635,537),node(786,597),node(932,656),node(562,624),node(711,685),node(856,743,BL2),
 poly('784,597 794,592 797,598 788,605',BL2), poly('938,416 943,419 936,429 930,428',BL2), poly('702,690 712,679 721,684 713,694',BL2),
 pin(506,796),pin(529,856),pin(986,873),pin(1059,785),pin(1134,697),pin(1111,637)
].join('');
define('cad-viewport',`
:host{display:block;position:relative;min-height:0;background:#1c232d;overflow:hidden}
svg.scene{position:absolute;left:0;top:0;width:1622px;height:690px;display:block}
.bar{position:relative;display:flex;justify-content:space-between;padding:7px 11px 0 3px}
.bar span{color:#e4e8ec;font-weight:500}
.bar div{display:flex;gap:9px;align-items:center}
.nav{position:absolute;right:16px;top:60px;width:136px;height:154px}
text{font-family:"Open Sans",sans-serif}
`,`<svg class="scene" viewBox="298 221 1622 690" aria-hidden="true">${building}
<g stroke-linecap="round" fill="none"><path d="M354 850L308 831" stroke="#3cc048" stroke-width="4"/><path d="M354 850L308 831" stroke="#a8f0a8"/><path d="M356 848L384 818" stroke="#cc3c44" stroke-width="5"/><path d="M354 849V815" stroke="#2c5c9c" stroke-width="6"/></g><circle cx="354" cy="815" r="3" fill="#b8d4f4"/>
<path d="M353 796h14l-14 14h15" stroke="#2246b8" stroke-width="1.5" fill="none"/><path d="M380 799l14 12M394 799l-14 12" stroke="#b02c34" fill="none"/><path d="M302 813l7 6 7-6M309 819v8" stroke="#2c9c3c" fill="none"/></svg>
<div class="bar"><span>[−][Custom View][FlatWithEdges]</span><div>${ic('vmin',14)}${ic('vmax',14)}${ic('vclose',14)}</div></div>
<svg class="nav" viewBox="1768 282 136 154" aria-label="View cube">
<ellipse cx="1836" cy="351" rx="56" ry="39" fill="none" stroke="#3d4550" stroke-width="14"/>
<path d="M1827 290l42 17-24 26-43-16z" fill="#c9cac6"/><path d="M1802 317l43 16v32l-41-17z" fill="#bfc0bd"/><path d="M1845 333l24-26-3 31-21 27z" fill="#a9aaa8"/>
<path d="M1802 317l43 16 24-26M1845 333v32" stroke="#333" stroke-dasharray="7 3" fill="none"/>
<g font-weight="700" font-size="11" fill="#3a3c44" text-anchor="middle"><text transform="translate(1838 313) rotate(-52)">TOP</text><text transform="translate(1823 346) rotate(14)" font-size="10">LEFT</text><text transform="translate(1860 340) rotate(-52)" font-size="8">FRONT</text></g>
<g font-weight="700" fill="#c8ccd0" text-anchor="middle"><text transform="translate(1787 330) rotate(28)" font-size="14">N</text><text transform="translate(1806 392) rotate(-30)" font-size="19">W</text><text transform="translate(1887 373) rotate(25)" font-size="18">S</text></g>
<rect x="1809" y="412" width="54" height="18" rx="3" fill="#a6a8b4" stroke="#777c88"/><text x="1827" y="425" font-size="12" fill="#444a58" text-anchor="middle">WCS</text><path d="M1848 418h10" stroke="#888e9c"/></svg>`);

/* Command window */
define('cad-command',`
:host{display:grid;grid-template-columns:25px 1fr;height:142px;border-top:3px solid #6c6c6c;background:#ccc;color:#181818}
.side{display:flex;flex-direction:column;align-items:center;gap:6px;background:linear-gradient(#777,#333);border-left:2px solid #333}
.main{display:flex;flex-direction:column}
.log{flex:1;margin:0;padding:15px 0 0 3px;font:13px/16px "Liberation Mono",monospace;color:#181818}
.in{height:26px;display:flex;align-items:center;gap:5px;padding-left:7px;background:#fff;border-top:2px solid #8a8a8a;border-bottom:1px solid #777}
input{flex:1;border:0;outline:0;background:none;font:italic 13px "Liberation Mono",monospace;padding:0 0 0 2px}
input::placeholder{color:#888;opacity:1}
`,`<div class="side">${ic('grip',18)}${ic('wx',13)}${ic('wrench',17)}</div>
<div class="main"><pre class="log">Command:
Command: grtcscopytop
Would you like to copy the visual elements (dimensions, annotations, etc.) of the drawing? [Yes/No] &lt;N&gt;:n
Command:
Command:
Command:</pre><div class="in">${ic('prompt',17)}${ic('ddown',8)}<input aria-label="Command" placeholder="Type a command"></div></div>`);

/* Bottom row: layout tabs and status bar */
define('cad-layouts',`
:host{display:flex;width:572px;padding:0 0 0 12px;background:#2f2f2f;border-top:1px solid #666}
button{height:21px;padding:0 15px 2px 14px;color:#ccc;background:linear-gradient(#3c3c3c,#5c5c5c);clip-path:polygon(0 0,100% 0,92% 100%,10% 100%)}
button.on{font-weight:700;color:#fff;background:linear-gradient(#555,#8a8a8a)}
button.add{width:26px;height:18px;padding:0;margin-left:2px;background:#444;clip-path:none;border-radius:0 6px 8px 6px;display:grid;place-items:center}
`,`<button class="on">Model</button><button>Layout1</button><button class="add" aria-label="New layout">${ic('plus',10)}</button>`);
const G=(w,...it)=>`<div class="g" style="flex:${w} 1 0">${it.map(i=>i==='v'?ic('down',9):ICONS[i]?`<button aria-label="${i.slice(2)}">${ic(i,18)}</button>`:`<span>${i}</span>`).join('')}</div>`;
define('cad-status',`
:host{display:flex;flex:1;min-width:0;gap:1px;padding:1px 0 2px;background:#6a6a6a;border-top:1px solid #777}
.g{display:flex;align-items:center;justify-content:space-evenly;min-width:0;background:#4a4a4a;border-left:1px solid #777;border-right:1px solid #333;color:#eee;white-space:nowrap}
button{display:flex}
`,G(180,'7.0745, 18.5517, 0.0000')+G(55,'MODEL')+G(76,'s_grid','s_snap','v')+G(30,'s_infer')+G(28,'s_dyn')+G(119,'s_ortho','s_polar','v','s_iso','v')+G(72,'s_track','s_osnap','v')+G(46,'s_lw','v')+G(30,'s_trans')+G(28,'s_cyc')+G(46,'s_3d','v')+G(122,'s_ucs','s_filt','v','s_giz','v')+G(176,'s_anb','s_anf','s_an','1:1 / 100%','v')+G(46,'s_gear','v')+G(30,'s_plus')+G(112,'s_rule','Decimal','v')+G(30,'s_qp')+G(31,'s_hw')+G(36,'s_isoo')+G(58,'s_clean','s_menu'));

define('cad-app',`
:host{display:flex;flex-direction:column}
.head{display:grid;grid-template-columns:48px minmax(0,1fr);grid-template-rows:26px 24px;background:#4a4a4a}
.app{grid-row:1/3;margin:2px 2px 5px;display:flex;align-items:center;justify-content:center;gap:2px;background:linear-gradient(#9a9a9a,#6c6c6c);border:1px solid #222}
.mid{flex:1;display:flex;min-height:0}
.work{flex:1;min-width:0;display:flex;flex-direction:column;border-left:1px solid #333}
cad-viewport{flex:1}
.bot{display:flex;height:32px}
`,`<div class="head"><button class="app" aria-label="Application menu">${ic('logo',30)}${ic('ddown',8)}</button><cad-title>Autodesk AutoCAD 2015 - NOT FOR RESALE    Drawing2.dwg</cad-title><cad-ribbon-tabs></cad-ribbon-tabs></div>
<cad-ribbon></cad-ribbon><cad-doctabs></cad-doctabs>
<div class="mid"><cad-palette></cad-palette><div class="work"><cad-levelbar></cad-levelbar><cad-viewport></cad-viewport><cad-command></cad-command></div></div>
<div class="bot"><cad-layouts></cad-layouts><cad-status></cad-status></div>`);
</script>
</body>
</html>
